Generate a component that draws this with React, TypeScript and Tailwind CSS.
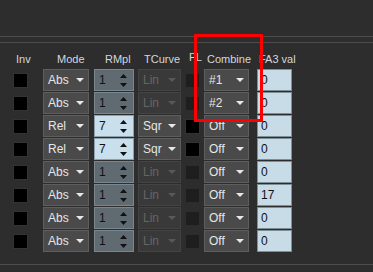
import React from "react";

type Row = {
  mode: string;
  rmpl: string;
  active: boolean;
  combine: string;
  fa3: string;
};

const rows: Row[] = [
  { mode: "Abs", rmpl: "1", active: false, combine: "#1", fa3: "0" },
  { mode: "Abs", rmpl: "1", active: false, combine: "#2", fa3: "0" },
  { mode: "Rel", rmpl: "7", active: true, combine: "Off", fa3: "0" },
  { mode: "Rel", rmpl: "7", active: true, combine: "Off", fa3: "0" },
  { mode: "Abs", rmpl: "1", active: false, combine: "Off", fa3: "0" },
  { mode: "Abs", rmpl: "1", active: false, combine: "Off", fa3: "17" },
  { mode: "Abs", rmpl: "1", active: false, combine: "Off", fa3: "0" },
  { mode: "Abs", rmpl: "1", active: false, combine: "Off", fa3: "0" },
];

// Small caret used by the combo boxes
function Caret({ color }: { color: string }) {
  return (
    <svg width="8" height="4" viewBox="0 0 8 4" className="shrink-0">
      <path d="M0 0 L8 0 L4 4 Z" fill={color} />
    </svg>
  );
}

function Combo({
  value,
  width,
  disabled = false,
}: {
  value: string;
  width: string;
  disabled?: boolean;
}) {
  return (
    <div
      className={
        "flex h-[22px] items-center justify-between border pl-[4px] pr-[4px] " +
        width +
        (disabled
          ? " border-[#434343] bg-[#393939] text-[#666666]"
          : " border-[#5e5e5e] bg-[#4a4a4a] text-[#e6e6e6]")
      }
    >
      <span>{value}</span>
      <Caret color={disabled ? "#585858" : "#e8e8e8"} />
    </div>
  );
}

function Spinner({ value, active }: { value: string; active: boolean }) {
  return (
    <div
      className={
        "flex h-[22px] w-[40px] items-center justify-between border pl-[4px] pr-[6px] text-[#111]" +
        (active
          ? " border-[#8da0ab] bg-[#c9dfeb]"
          : " border-[#7b878e] bg-[#5f6a71]")
      }
    >
      <span>{value}</span>
      <svg width="7" height="13" viewBox="0 0 7 13">
        <path d="M0 4 L7 4 L3.5 0 Z" fill="#111" />
        <path d="M0 9 L7 9 L3.5 13 Z" fill="#111" />
      </svg>
    </div>
  );
}

function Check({ dark }: { dark: boolean }) {
  return (
    <div
      className={
        "h-[15px] w-[15px] border " +
        (dark ? "border-[#333] bg-black" : "border-[#2c2c2c] bg-[#1e1e1e]")
      }
    />
  );
}

export default function App() {
  return (
    <div
      className="relative h-[272px] w-[373px] overflow-hidden bg-[#2d2d2d] text-[12px]"
      style={{ fontFamily: "'Liberation Sans', Arial, sans-serif" }}
    >
      <div className="h-[36px]" />
      <div className="h-px bg-[#4d4d4d]" />
      <div className="h-[5px]" />
      <div className="h-px bg-[#4d4d4d]" />

      {/* Column headers */}
      <div className="mt-[8px] flex h-[16px] items-center text-[11px] leading-none whitespace-nowrap text-[#d3d7de]">
        <span className="ml-[16px] w-[41px]">Inv</span>
        <span className="w-[48px]">Mode</span>
        <span className="w-[39px]">RMpl</span>
        <span className="w-[45px]">TCurve</span>
        <span className="w-[18px] -translate-y-[2px]">FL</span>
        <span className="w-[52px]">Combine</span>
        <span>FA3 val</span>
      </div>

      {/* Parameter rows */}
      <div className="mt-[2px] flex flex-col gap-px">
        {rows.map((r, i) => (
          <div key={i} className="flex h-[22px] items-center leading-none">
            <div className="ml-[13px]">
              <Check dark />
            </div>
            <div className="ml-[15px]">
              <Combo value={r.mode} width="w-[46px]" />
            </div>
            <div className="ml-[5px]">
              <Spinner value={r.rmpl} active={r.active} />
            </div>
            <div className="ml-[4px]">
              <Combo
                value={r.active ? "Sqr" : "Lin"}
                width="w-[43px]"
                disabled={!r.active}
              />
            </div>
            <div className="ml-[4px]">
              <Check dark={r.active} />
            </div>
            <div className="ml-[4px]">
              <Combo value={r.combine} width="w-[45px]" />
            </div>
            <div className="ml-[8px] flex h-[22px] w-[35px] items-center border border-[#7e8e97] bg-[#c8dce8] pl-[3px] text-[#111]">
              {r.fa3}
            </div>
          </div>
        ))}
      </div>

      <div className="mt-[12px] h-px bg-[#4d4d4d]" />

      {/* Highlight marker */}
      <div className="absolute left-[194px] top-[34px] h-[88px] w-[69px] border-[3px] border-[#ff0000]" />
    </div>
  );
}
